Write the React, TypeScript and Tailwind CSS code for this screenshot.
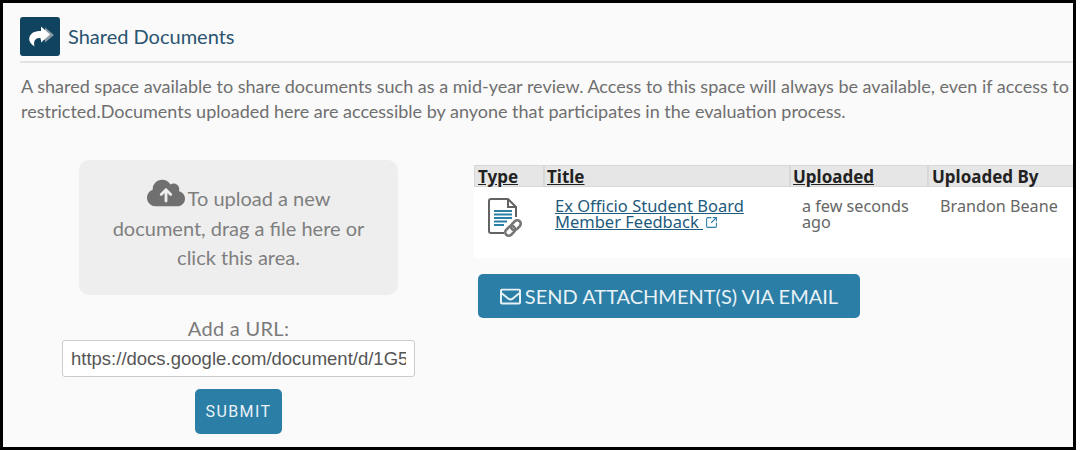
import { FaRegEnvelope } from "react-icons/fa";
import { FaCloudArrowUp } from "react-icons/fa6";
import { SquareArrowOutUpRight } from "lucide-react";

const bodyFont = "font-['Lato','Noto_Sans',sans-serif]";
const tableFont = "font-['Noto_Sans','Open_Sans',sans-serif]";

function ShareIcon() {
  return (
    <svg width="40" height="39" viewBox="0 0 40 38" className="rounded-[3px] bg-[#0f435f]">
      <path d="M25 10 L34 17.5 L25 25 Z M20 14 L27 14 L27 22 L20 22 Z" fill="#8b9ba6" />
      <path
        d="M21 9 L30 17 L21 25 L21 20.5 C16 20.5 13 22 14.5 29 C10 26 8.5 22.5 9.5 19.5 C11 15 15.500 13.500 21 13.500 Z"
        fill="#ffffff"
      />
    </svg>
  );
}

function DocIcon() {
  return (
    <svg width="38" height="42" viewBox="0 0 38 42" fill="none">
      <path d="M17 36 H4 Q2 36 2 34 V4 Q2 2 4 2 H21 L29 10 V20" stroke="#636363" strokeWidth="2" />
      <path d="M21 2 V10 H29" stroke="#636363" strokeWidth="2" />
      <path d="M7 14 H25 M7 17.500 H25 M7 21 H25 M7 24.500 H20 M7 28 H17" stroke="#2b7fa6" strokeWidth="2.200" />
      <g stroke="#777777" strokeWidth="2.600" fill="none" transform="rotate(-45 26 31)">
        <rect x="16.500" y="27.500" width="11" height="7" rx="3.500" />
        <rect x="24.500" y="27.500" width="11" height="7" rx="3.500" />
      </g>
    </svg>
  );
}

export default function App() {
  return (
    <div className={`h-[451px] w-[1080px] bg-white ${bodyFont}`}>
      <div className="h-[450px] w-[1076px] overflow-hidden border-[3px] border-black bg-[#fafafa]">
        <div className="ml-[17px] mt-[14px] flex h-[46px] items-start gap-[8px] border-b-2 border-[#e3e3e3]">
          <ShareIcon />
          <h2 className="pt-[5px] text-[20px] leading-[28px] text-[#2a5470]">Shared Documents</h2>
        </div>
        <p className="ml-[18px] mt-[11px] w-[1200px] text-[18px] leading-[24.500px] text-[#6f6f6f]">
          A shared space available to share documents such as a mid-year review. Access to this space will always be available, even if access to the
          <br />
          restricted.Documents uploaded here are accessible by anyone that participates in the evaluation process.
        </p>

        <div className="mt-[37px] flex items-start">
          <div className="ml-[59px] flex w-[353px] shrink-0 flex-col items-center">
            <div className="h-[135px] w-[319px] rounded-[10px] bg-[#eeeeee] px-[20px] pt-[14px] text-center text-[20px] leading-[29.500px] text-[#7f7f7f]">
              <FaCloudArrowUp className="mr-[3px] inline-block align-[-6px] text-[#707070]" size={38} />
              To upload a new
              <br />
              document, drag a file here or
              <br />
              click this area.
            </div>
            <label className="mt-[21px] text-[20px] leading-[24px] tracking-[0.300px] text-[#7a7a7a]">Add a URL:</label>
            <input
              readOnly
              value="https://docs.google.com/document/d/1G5eXtkQ"
              className="h-[37px] w-[353px] rounded-[3px] border border-[#cccccc] bg-white px-[8px] font-['Liberation_Sans',sans-serif] text-[18.500px] text-[#555555]"
            />
            <button className="mt-[12px] h-[45px] w-[87px] rounded-[5px] bg-[#2b7ea6] font-['Roboto',sans-serif] text-[16px] tracking-[1.400px] text-[#e8f2f6]">
              SUBMIT
            </button>
          </div>

          <div className="ml-[59px] w-[620px] shrink-0 pt-[5px]">
            <div className={`grid grid-cols-[70px_246px_138px_166px] ${tableFont}`}>
              <div className="h-[22px] border border-[#d8d8d8] bg-[#e6e6e6] pl-[3px] text-[17px] font-bold leading-[22px] text-[#222222] underline">Type</div>
              <div className="h-[22px] border border-[#d8d8d8] bg-[#e6e6e6] pl-[2px] text-[17px] font-bold leading-[22px] text-[#222222] underline">Title</div>
              <div className="h-[22px] border border-[#d8d8d8] bg-[#e6e6e6] pl-[2px] text-[17px] font-bold leading-[22px] text-[#222222] underline">Uploaded</div>
              <div className="h-[22px] border border-[#d8d8d8] bg-[#e6e6e6] pl-[3px] text-[17px] font-bold leading-[22px] text-[#222222]">Uploaded By</div>
              <div className="h-[71px] bg-white pl-[13px] pt-[10px]">
                <DocIcon />
              </div>
              <div className="h-[71px] bg-white pl-[11px] pr-[30px] pt-[11px] text-[16.500px] leading-[16px] text-[#1d5a7c]">
                <span className="underline">Ex Officio Student Board Member Feedback&nbsp;</span>
                <SquareArrowOutUpRight className="ml-[2px] inline-block align-[-1px] text-[#2b7ea6]" size={13} />
              </div>
              <div className="h-[71px] bg-white pl-[12px] pr-[8px] pt-[11px] text-[16.200px] leading-[16px] text-[#666666]">a few seconds ago</div>
              <div className="h-[71px] bg-white pl-[12px] pt-[11px] text-[16.200px] leading-[16px] text-[#666666]">Brandon Beane</div>
            </div>
            <button className="ml-[4px] mt-[16px] flex h-[44px] w-[382px] items-center justify-center gap-[4px] rounded-[5px] bg-[#2b7ea6] text-[20px] text-[#e8f2f6]">
              <FaRegEnvelope size={21} />
              SEND ATTACHMENT(S) VIA EMAIL
            </button>
          </div>
        </div>
      </div>
    </div>
  );
}
